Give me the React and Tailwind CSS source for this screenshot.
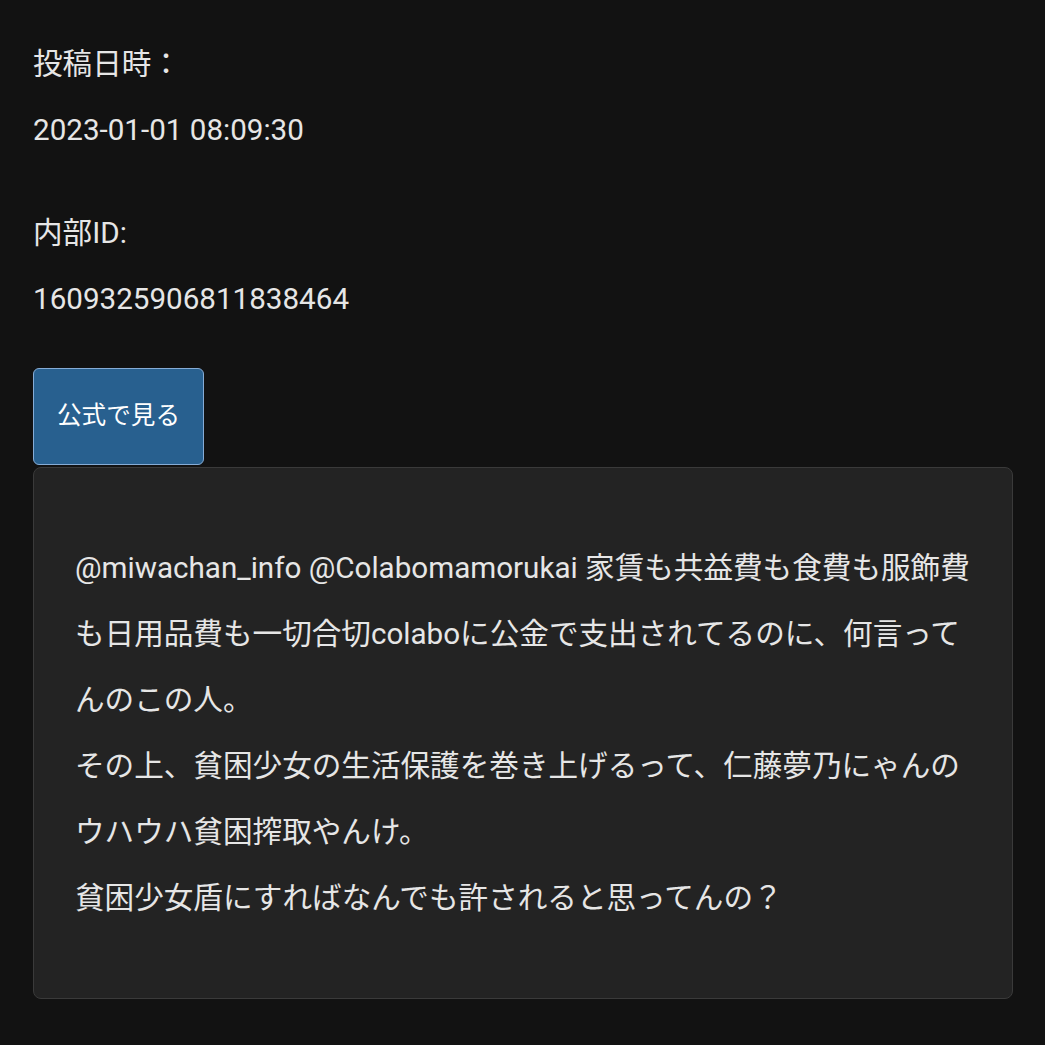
export default function App() {
  const font = { fontFamily: 'Roboto, "Noto Sans CJK JP", sans-serif' };
  return (
    <div className="min-h-screen w-full bg-[#121212] text-[#e6e6e6] pl-[33px] pr-[32px] pt-[31px] pb-[40px]" style={font}>
      <div className="text-[29.6px] leading-[66px]">
        <div>投稿日時：</div>
        <div>2023-01-01 08:09:30</div>
      </div>
      <div className="mt-[37px] text-[29.6px] leading-[66px]">
        <div>内部ID:</div>
        <div>1609325906811838464</div>
      </div>
      <button className="mt-[36px] h-[97px] w-[171px] rounded-[6px] border border-[#86acd6] bg-[#28608f] text-[24.6px] text-white flex items-center justify-center">
        公式で見る
      </button>
      <div className="mt-[2px] h-[532px] rounded-[8px] border border-[#3a3a3a] bg-[#232323] pl-[41px] pr-[36px] pt-[67px] text-[29.6px] leading-[66px] text-[#e6e6e6]">
        <p>
          @miwachan_info @Colabomamorukai 家賃も共益費も食費も服飾費も日用品費も一切合切colaboに公金で支出されてるのに、何言ってんのこの人。
          <br />
          その上、貧困少女の生活保護を巻き上げるって、仁藤夢乃にゃんのウハウハ貧困搾取やんけ。
          <br />
          貧困少女盾にすればなんでも許されると思ってんの？
        </p>
      </div>
    </div>
  );
}
